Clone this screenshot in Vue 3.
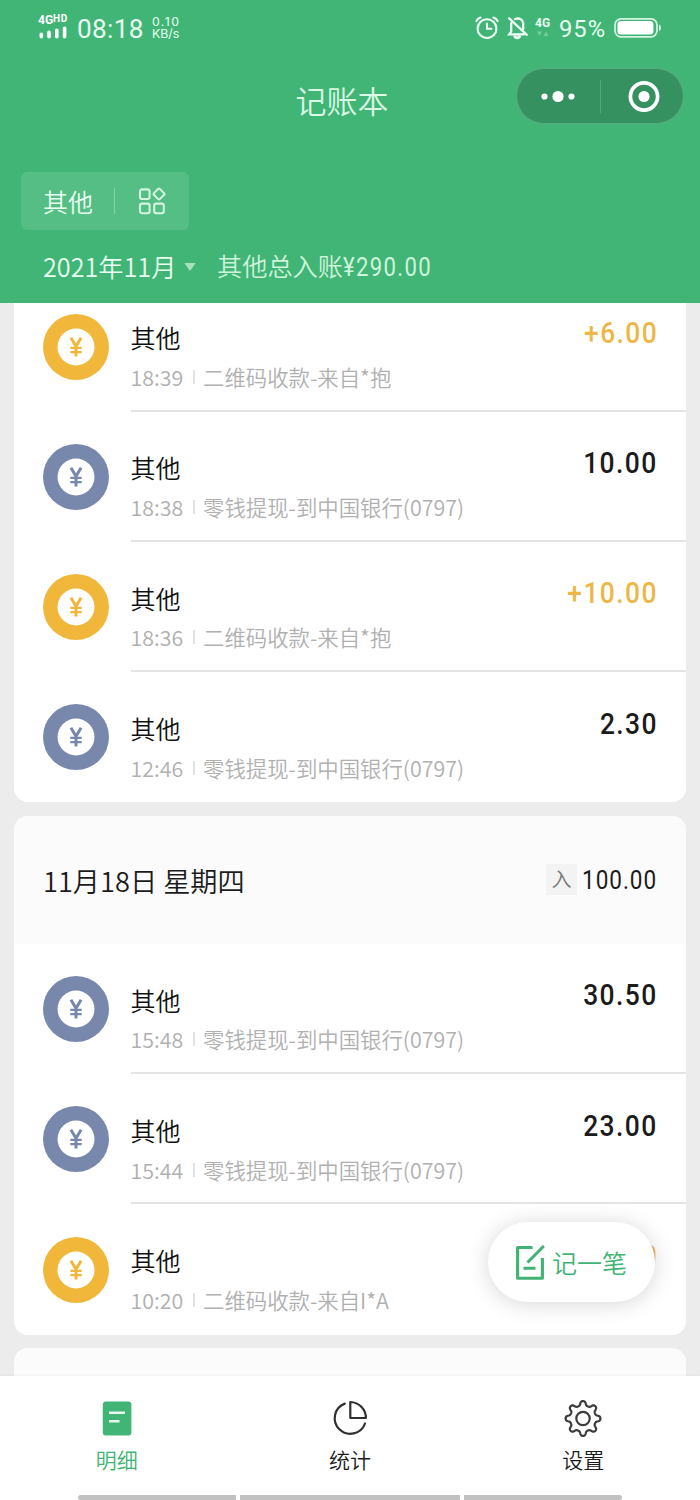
<script setup>
const first = [
  { time: '18:39', note: '二维码收款-来自*抱', amount: '+6.00', income: true },
  { time: '18:38', note: '零钱提现-到中国银行(0797)', amount: '10.00' },
  { time: '18:36', note: '二维码收款-来自*抱', amount: '+10.00', income: true },
  { time: '12:46', note: '零钱提现-到中国银行(0797)', amount: '2.30' },
]
const second = [
  { time: '15:48', note: '零钱提现-到中国银行(0797)', amount: '30.50' },
  { time: '15:44', note: '零钱提现-到中国银行(0797)', amount: '23.00' },
  { time: '10:20', note: '二维码收款-来自I*A', amount: '+8.00', income: true },
]
const groups = [
  { id: 'a', rows: first },
  { id: 'b', title: '11月18日 星期四', total: '100.00', rows: second },
]

// Outline of an eight-toothed cog with rounded teeth
const gear = (() => {
  const pts = []
  for (let i = 0; i < 240; i++) {
    const t = (i / 240) * Math.PI * 2
    const r = 15.3 + 2.4 * Math.tanh(1.6 * Math.cos(8 * t) - 0.25)
    pts.push(`${(20 + r * Math.sin(t)).toFixed(2)} ${(20 - r * Math.cos(t)).toFixed(2)}`)
  }
  return `M${pts.join('L')}Z`
})()
</script>

<template>
  <div class="screen">
    <header class="top">
      <div class="status">
        <div class="net">
          <div class="net-label">4G<sup>HD</sup></div>
          <svg width="30" height="13" viewBox="0 0 30 13"><path d="M3.3 8.3v2.4M11 6.3v4.4M18.8 4.3v6.4M26.6 2.3v8.4" stroke="#fff" stroke-width="3.6" stroke-linecap="round" /></svg>
        </div>
        <div class="clock">08:18</div>
        <div class="speed"><span>0.10</span><span>KB/s</span></div>
        <div class="gap"></div>
        <svg class="alarm" width="24" height="24" viewBox="0 0 24 24" fill="none" stroke="#effff5" stroke-width="2.1" stroke-linecap="round">
          <circle cx="12" cy="12.7" r="9.4" /><path d="M12 7.5v5.2h4.4M1.4 5.2Q2.4 2.4 5.6 1.5M22.6 5.2Q21.6 2.4 18.4 1.5" />
        </svg>
        <svg class="bell" width="22" height="24" viewBox="0 0 22 24" fill="none" stroke="#effff5" stroke-width="2.3" stroke-linecap="round">
          <path d="M8 3Q14.8 1 16.2 7v6M4.2 7.2v8.2L2.2 18.4h14.5M2.2 2.4l17.6 16.4" /><path d="M7.8 20.6q2.4 2.2 4.8 0" stroke-width="2.8" />
        </svg>
        <div class="g4">4G<svg width="12" height="6" viewBox="0 0 12 6"><path d="M0 .5h5L2.5 5zM6.5 5h5L9 .5z" fill="#75cf9d" /></svg></div>
        <div class="percent">95%</div>
        <svg class="battery" width="48" height="22" viewBox="0 0 48 22">
          <rect x="1" y="1.8" width="42" height="18" rx="6" fill="none" stroke="#d7f6e3" stroke-width="1.7" />
          <rect x="3.4" y="4.1" width="36" height="13.4" rx="3.5" fill="#fff" />
          <path d="M45 7.5q2 .5 2 3.2t-2 3.2z" fill="#d7f6e3" />
        </svg>
      </div>
      <div class="titlebar">
        <h1>记账本</h1>
        <div class="capsule">
          <svg width="166" height="54" viewBox="0 0 166 54">
            <circle cx="27.5" cy="27.5" r="3.1" fill="#fff" /><circle cx="41" cy="27.5" r="5.6" fill="#fff" /><circle cx="54.5" cy="27.5" r="3.1" fill="#fff" />
            <path d="M83.5 11v33" stroke="#54a77a" />
            <circle cx="127" cy="27.5" r="13.6" fill="none" stroke="#fff" stroke-width="3.7" /><circle cx="127" cy="27.5" r="5.6" fill="#fff" />
          </svg>
        </div>
      </div>
      <div class="filter">
        <span>其他</span><i></i>
        <svg width="28" height="28" viewBox="0 0 28 28" fill="none" stroke="#d4f4e0" stroke-width="2.1">
          <rect x="2" y="2.4" width="9.6" height="9.6" rx="2" /><rect x="2" y="16.6" width="9.6" height="9.6" rx="2" /><rect x="16.2" y="16.6" width="9.6" height="9.6" rx="2" />
          <rect x="16.8" y="2.8" width="8.4" height="8.4" rx="1.5" transform="rotate(45 21 7)" />
        </svg>
      </div>
      <div class="summary">
        <span class="month">2021年11月</span>
        <svg width="12" height="8" viewBox="0 0 12 8"><path d="M.3 0h11.4L6 8z" fill="#a7e2bf" /></svg>
        <span class="sum">其他总入账<b>¥290.00</b></span>
      </div>
    </header>

    <main class="list">
      <section v-for="g in groups" :key="g.id" class="card" :class="g.id">
        <div v-if="g.title" class="day">
          <span>{{ g.title }}</span>
          <div class="total"><em>入</em><span>{{ g.total }}</span></div>
        </div>
        <div v-for="r in g.rows" :key="r.time" class="row">
          <div class="coin" :class="{ gold: r.income }">
            <svg width="66" height="66" viewBox="0 0 66 66">
              <circle cx="33" cy="33" r="33" fill="currentColor" /><circle cx="33" cy="33" r="18.5" fill="#fff" />
              <path d="M27.9 23.8L33 32.3l5.1-8.5M33 31.5v10.9" fill="none" stroke="currentColor" stroke-width="3" /><path d="M27.3 33.9h11.4M27.3 38.1h11.4" fill="none" stroke="currentColor" stroke-width="2.3" />
            </svg>
          </div>
          <div class="body">
            <div class="info">
              <div class="name">其他</div>
              <div class="meta"><span class="time">{{ r.time }}</span><i></i><span>{{ r.note }}</span></div>
            </div>
            <div class="amount" :class="{ gold: r.income }">{{ r.amount }}</div>
          </div>
        </div>
      </section>
      <section class="card peek"></section>
    </main>

    <button class="add">
      <svg width="32" height="36" viewBox="0 0 32 36" fill="none" stroke="#40b375" stroke-width="3.1">
        <path d="M18.5 3.5H3.6v30.7h24.8V14M9.5 24.3h12" stroke-linejoin="round" /><path d="M29.8 2L13.5 18.5" />
      </svg>
      <span>记一笔</span>
    </button>

    <nav class="tabs">
      <div class="tab on">
        <svg width="40" height="40" viewBox="0 0 40 40"><rect x="5.8" y="3.5" width="28.6" height="34" rx="3" fill="#40b575" /><path d="M12 14.8h16M12 23.2h10.5" stroke="#e6f8ed" stroke-width="2.4" /></svg>
        <span>明细</span>
      </div>
      <div class="tab">
        <svg width="40" height="40" viewBox="0 0 40 40" fill="none" stroke="#303030" stroke-width="2.2" stroke-linejoin="round" stroke-linecap="round">
          <path d="M14.8 5.6A15.6 15.6 0 1 0 35 25.5M20.3 4a16 16 0 0 1 15.6 16H20.3z" />
        </svg>
        <span>统计</span>
      </div>
      <div class="tab">
        <svg width="40" height="40" viewBox="0 0 40 40" fill="none" stroke="#3b3b3b" stroke-width="2.2" stroke-linejoin="round"><g transform="translate(0 .5)"><path :d="gear" /><circle cx="20" cy="20" r="6.7" /></g></svg>
        <span>设置</span>
      </div>
      <div class="homebar"><i></i><i></i><i></i></div>
    </nav>
  </div>
</template>

<style>
body { margin: 0; }
</style>

<style scoped>
* { box-sizing: border-box; }
.screen { position: relative; width: 700px; height: 1500px; overflow: hidden; display: flex; flex-direction: column; background: #ececec; font-family: "Noto Sans CJK SC", sans-serif; font-weight: 350; color: #1b1b1b; }
svg { display: block; flex: none; }
.top { flex: none; height: 303px; background: #40b575; color: #eafff2; display: flex; flex-direction: column; }
.status { height: 56px; padding: 0 38px 0 38px; display: flex; align-items: center; font-family: Inter, sans-serif; }
.net { width: 33px; padding-bottom: 3px; }
.net-label { display: flex; font: 700 12px/12px Roboto, sans-serif; color: #fff; }
.net-label sup { font: 700 10px/9px Roboto, sans-serif; letter-spacing: .6px; }
.clock { margin: 2px 0 0 6px; width: 75px; font: 400 26.2px/30px Roboto, sans-serif; letter-spacing: .3px; }
.speed { display: flex; flex-direction: column; font: 400 12.3px/12px Inter, sans-serif; }
.speed span:first-child { letter-spacing: 1.4px; }
.gap { flex: 1; }
.alarm { margin-right: 8px; }
.bell { margin-right: 6px; }
.g4 { width: 17px; margin-right: 7px; padding-bottom: 2px; font: 700 12px/12px Roboto, sans-serif; }
.g4 svg { margin: 2px 0 0 2px; }
.percent { width: 48px; margin: 1px 7px 0 0; font: 400 23.8px/28px Roboto, sans-serif; letter-spacing: 1px; }
.titlebar { position: relative; height: 92px; }
h1 { margin: 0; padding: 22px 16px 0 0; text-align: center; font-size: 31px; font-weight: 350; line-height: 44px; color: #daf8e5; }
.capsule { position: absolute; right: 16px; top: 12px; width: 168px; height: 56px; border: 1px solid #5dab80; border-radius: 28px; background: #359160; }
.filter { margin: 24px 0 0 21px; width: 168px; height: 58px; border-radius: 6px; background: #54be84; display: flex; align-items: center; padding-left: 22px; font-size: 25px; }
.filter i { width: 1px; height: 26px; margin: 0 23px 0 21px; background: #86d3a7; }
.summary { display: flex; align-items: center; margin: 16px 0 0 43px; height: 40px; font-size: 25.2px; }
.summary svg { margin-top: 2px; }
.month { width: 141px; }
.sum { margin: -2px 0 0 21px; color: #d0f3dc; white-space: nowrap; }
.sum b { display: inline-block; font: 400 25.2px/30px Roboto, sans-serif; letter-spacing: 1.5px; transform: scaleX(.88); transform-origin: left; }
.list { flex: none; height: 1073px; overflow: hidden; padding: 0 14px; }
.card { background: #fff; border-radius: 14px; overflow: hidden; margin-bottom: 13.6px; }
.card.a { margin-top: -21.6px; }
.day { height: 127.9px; background: #fbfbfb; display: flex; justify-content: space-between; align-items: center; padding: 0 29px 0 29px; font-size: 27.2px; }
.total { display: flex; align-items: center; width: 111px; }
.total span { font: 400 25.6px/36px Roboto, sans-serif; letter-spacing: 1.1px; transform: scaleX(.88); transform-origin: left; }
.total em { flex: none; width: 31px; height: 31px; margin-right: 5px; background: #f3f3f3; font: 350 20px/30px "Noto Sans CJK SC", sans-serif; text-align: center; color: #777; }
.row { height: 130.25px; display: flex; padding-left: 29px; }
.coin { width: 66px; margin-top: 32.3px; color: #7788ac; }
.coin.gold { color: #f1b73b; }
.body { flex: 1; margin-left: 21.5px; display: flex; justify-content: space-between; border-bottom: 2px solid #e4e4e4; padding-right: 28px; }
.row:last-child .body { border-bottom: 0; }
.name { margin-top: 37.8px; font-size: 25px; line-height: 36px; color: #111; }
.meta { display: flex; align-items: center; margin-top: 6.6px; font-size: 21.4px; line-height: 30px; color: #b0b0b0; }
.time { width: 53.5px; }
.meta i { width: 2px; height: 14px; margin: 0 8.5px; background: #e2e2e2; }
.amount { margin-top: 32.5px; height: 38px; font: 500 30px/38px Roboto, sans-serif; letter-spacing: 1.6px; transform: scaleX(.88); transform-origin: right; }
.amount.gold { color: #edb747; }
.peek { height: 128px; background: #fbfbfb; }
.add { position: absolute; left: 488px; top: 1222px; width: 167px; height: 80px; padding: 0 0 0 26px; border: 0; border-radius: 40px; background: #fff; box-shadow: 0 2px 22px rgba(0, 0, 0, .16); display: flex; align-items: center; color: #40b375; font: 350 25px/36px "Noto Sans CJK SC", sans-serif; }
.add span { margin: -1px 0 0 6px; }
.tabs { position: relative; flex: 1; background: #fff; display: flex; box-shadow: 0 -1px 2px rgba(0, 0, 0, .04); }
.tab { flex: 1; display: flex; flex-direction: column; align-items: center; padding-top: 22px; font-size: 21px; line-height: 30px; }
.tab span { margin-top: 6px; }
.tab.on { color: #40b375; }
.homebar { position: absolute; left: 78px; bottom: 0; display: flex; gap: 4px; }
.homebar i { width: 158px; height: 5px; background: #c1c1c1; border-radius: 3px 0 0 3px; }
.homebar i:nth-child(2) { width: 220px; border-radius: 0; }
.homebar i:last-child { border-radius: 0 3px 3px 0; }
</style>
